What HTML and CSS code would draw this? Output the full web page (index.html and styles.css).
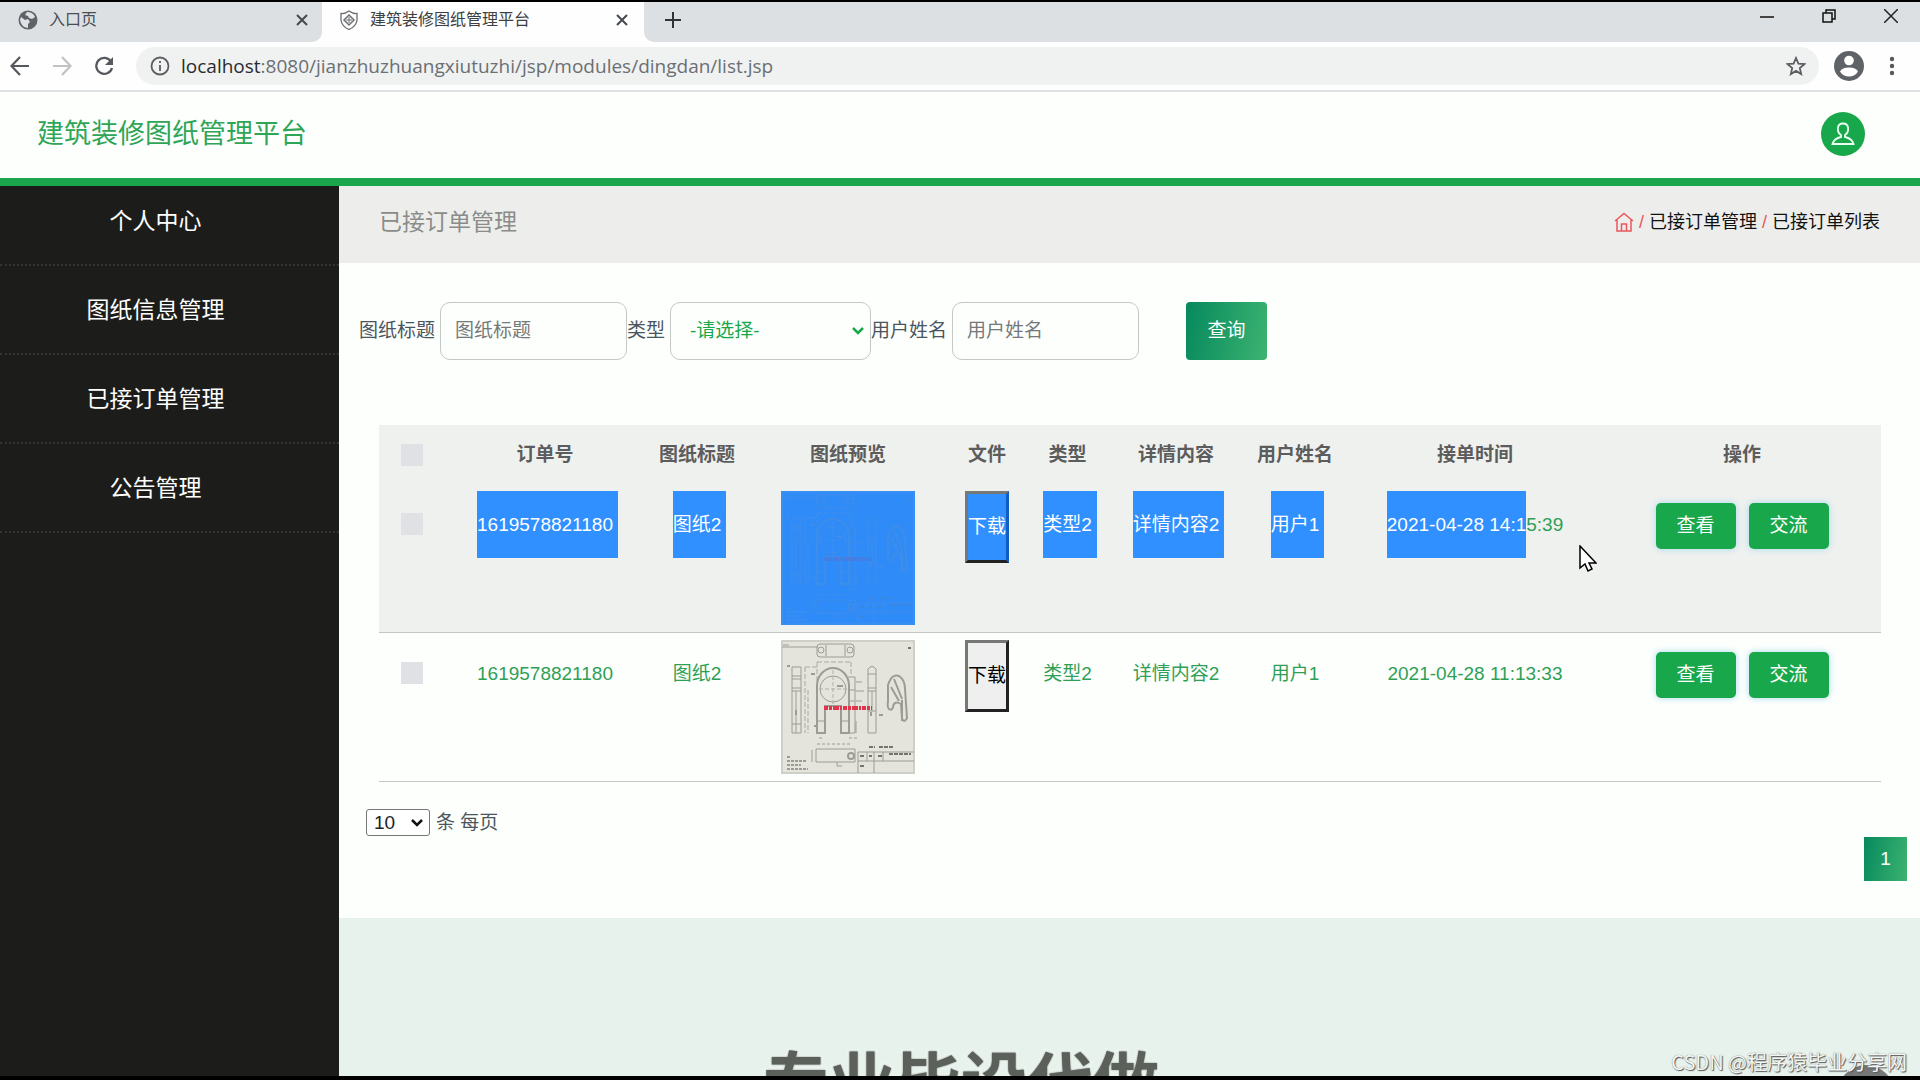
FILE: index.html
```html
<!DOCTYPE html>
<html lang="zh-CN">
<head>
<meta charset="utf-8">
<meta name="viewport" content="width=device-width, initial-scale=1">
<title>建筑装修图纸管理平台</title>
<link rel="stylesheet" href="styles.css">
</head>
<body>
<svg class="defs" aria-hidden="true">
  <symbol id="drawing" viewBox="0 0 134 134">
    <g fill="none" stroke="#9b9c95" stroke-width="1">
      <rect x="1" y="1" width="132" height="132" stroke="#b9bab2"/>
      <path d="M1 7h36M8 5h-6" />
      <rect x="36" y="4" width="37" height="13" rx="3"/>
      <circle cx="40" cy="10" r="3"/><circle cx="69" cy="10" r="3"/>
      <path d="M45 5v11M64 5v11"/>
      <path d="M36 22h34M36 22v70M70 22v14M24 27v66M27 50v43M24 27h12" stroke-dasharray="5 2" stroke="#a9aaa3"/>
      <path d="M11 27h9v66h-9zM11 36h9M11 39h9M11 48h9M11 51h9M11 84h9M15 51v42"/>
      <path d="M36 93V46a16 18 0 0 1 32 0v47h-8V66H44v27z" stroke-width="2"/>
      <circle cx="52" cy="49" r="13"/>
      <path d="M52 30v36M38 49h28" stroke-dasharray="4 2" stroke="#b0b1aa"/>
      <path d="M36 81h8v12M60 81h8M67 37h7v56h-7M67 50h7M67 61h7M75 42h6M75 51h8M75 61h6M75 81v12"/>
      <path d="M87 93V29q4-5 8 0v64zM87 34h8M87 48h8M87 51h8M87 71h8M91 51v20"/>
      <path d="M107 61V45q4-12 11-9q6 4 6 13l2 29q-3 6-5 0l-1-14q-7-4-8 3q-1 4-4 2q-2-2-1-8zM110 47l8 14M113 39l8 20M121 60v21" stroke-width="2"/>
      <path d="M36 104h34M38 98h4M68 98h10" stroke-dasharray="3 2"/>
      <path d="M35 109h39v13H35zM31 110v12M56 122v4h5M77 112h56M77 121h56M77 112v21M86 112v9M93 112v21M102 112v9"/>
      <circle cx="70" cy="116" r="3" stroke-width="2"/>
      <path d="M6 117h4M6 121h19M6 125h14M6 129h21" stroke-width="2" stroke-dasharray="3 1"/>
      <path d="M88 107h6M98 107h14M79 116h5M88 116h3M97 116h4M79 126h4M108 114h22M127 8h3" stroke="#74756f" stroke-width="2" stroke-dasharray="4 1"/>
      <path d="M6 26h3M30 34h4M56 46h6M15 70v5M90 72v4M33 86h3M98 75h4" stroke-width="2"/>
    </g>
    <path d="M43 68h48" stroke="#e1354b" stroke-width="4" stroke-dasharray="4 1 3 1 6 1 2 1"/>
  </symbol>
</svg>

<div class="window">
  <div class="tabs">
    <div class="tab">
      <svg class="tab-icon" viewBox="0 0 20 20"><circle cx="10" cy="10" r="9.500" fill="#5f6368"/><path d="M3 7l4 3 3-1 2 3-2 2v4q-7-1-8-8zM9 2q6 0 8 5l-3 2-3-1-1-2-3-1z" fill="#dee1e6"/></svg>
      <span class="tab-title">入口页</span>
      <button class="icon-button" aria-label="关闭标签页"><svg width="12" height="12" viewBox="0 0 12 12"><path d="M1 1l10 10M11 1L1 11" stroke="#45484c" stroke-width="2"/></svg></button>
    </div>
    <div class="tab tab-active">
      <svg class="tab-icon" viewBox="0 0 20 20" fill="none" stroke="#6b6e72"><path d="M10 1q4 3 8 2.500v7q-1 6-8 9q-7-3-8-9v-7q4 .5 8-2.500z" stroke-width="1.300"/><path d="M10 5l5 5-5 5-5-5z" stroke-width="1.500"/><path d="M10 7v6M7 10h6"/></svg>
      <span class="tab-title">建筑装修图纸管理平台</span>
      <button class="icon-button" aria-label="关闭标签页"><svg width="12" height="12" viewBox="0 0 12 12"><path d="M1 1l10 10M11 1L1 11" stroke="#45484c" stroke-width="2"/></svg></button>
    </div>
    <button class="icon-button new-tab" aria-label="新标签页"><svg width="16" height="16" viewBox="0 0 16 16"><path d="M8 0v16M0 8h16" stroke="#333" stroke-width="2"/></svg></button>
    <div class="window-controls">
      <button class="icon-button" aria-label="最小化"><svg width="14" height="14" viewBox="0 0 14 14"><path d="M0 8h14" stroke="#111" stroke-width="1.500"/></svg></button>
      <button class="icon-button" aria-label="还原"><svg width="14" height="14" viewBox="0 0 14 14" fill="none" stroke="#111" stroke-width="1.500"><path d="M1 4h9v9H1zM4 4V1h9v9h-3"/></svg></button>
      <button class="icon-button" aria-label="关闭"><svg width="14" height="14" viewBox="0 0 14 14"><path d="M0 0l14 14M14 0L0 14" stroke="#222" stroke-width="1.500"/></svg></button>
    </div>
  </div>
  <div class="toolbar">
    <button class="icon-button" aria-label="后退"><svg width="20" height="20" viewBox="0 0 20 20" fill="none" stroke="#55585c" stroke-width="2.200"><path d="M19 10H2M10 1L1.500 10l8.500 9"/></svg></button>
    <button class="icon-button" aria-label="前进"><svg width="20" height="20" viewBox="0 0 20 20" fill="none" stroke="#c0c2c4" stroke-width="2.200"><path d="M1 10h17M10 1l8.500 9-8.500 9"/></svg></button>
    <button class="icon-button" aria-label="重新加载"><svg width="20" height="20" viewBox="0 0 20 20" fill="none" stroke="#55585c" stroke-width="2.300"><path d="M17 5.500A8 8 0 1 0 18 12"/><path d="M19 1v8h-8z" fill="#55585c" stroke="none"/></svg></button>
    <div class="address">
      <svg width="20" height="20" viewBox="0 0 20 20" fill="none" stroke="#5a5d61" stroke-width="1.800"><circle cx="10" cy="10" r="8.500"/><path d="M10 9v6M10 5v2"/></svg>
      <span class="url"><span class="host">localhost</span>:8080/jianzhuzhuangxiutuzhi/jsp/modules/dingdan/list.jsp</span>
      <svg width="20" height="20" viewBox="0 0 20 20" fill="none" stroke="#5a5d61" stroke-width="1.800"><path d="M10 2l2.400 5.600 6 .5-4.600 4 1.400 6-5.200-3.200-5.200 3.200 1.400-6-4.600-4 6-.5z"/></svg>
    </div>
    <button class="icon-button" aria-label="用户"><svg width="30" height="30" viewBox="0 0 30 30"><circle cx="15" cy="15" r="15" fill="#5f6368"/><circle cx="15" cy="9.500" r="4.800" fill="#fff"/><path d="M6 20.500q2-4 9-4t9 4q-3 5-9 5t-9-5z" fill="#fff"/></svg></button>
    <button class="icon-button" aria-label="菜单"><svg width="6" height="20" viewBox="0 0 6 20" fill="#55585c"><circle cx="3" cy="3" r="2.200"/><circle cx="3" cy="10" r="2.200"/><circle cx="3" cy="17" r="2.200"/></svg></button>
  </div>
</div>

<header class="site-header">
  <h1 class="brand">建筑装修图纸管理平台</h1>
  <button class="avatar" aria-label="个人中心"><svg width="24" height="24" viewBox="0 0 24 24" fill="none" stroke="#e8fff0" stroke-width="1.800"><path d="M12 1.500c-7 0-6 9-2 11.500v2q-7 1.500-8.500 7h21q-1.500-5.500-8.500-7v-2c4-2.500 5-11.500-2-11.500z"/></svg></button>
</header>

<div class="shell">
  <nav class="sidebar">
    <ul class="menu">
      <li><a href="#">个人中心</a></li>
      <li><a href="#">图纸信息管理</a></li>
      <li><a href="#">已接订单管理</a></li>
      <li><a href="#">公告管理</a></li>
    </ul>
  </nav>
  <main class="content">
    <div class="page-bar">
      <h2 class="page-title">已接订单管理</h2>
      <div class="crumbs">
        <a href="#" aria-label="首页"><svg class="home" width="20" height="20" viewBox="0 0 20 20" fill="none" stroke="#e9575c" stroke-width="1.500"><path d="M1 9l9-7.500L19 9M3 8v11h14V8M7.500 19v-7h5v7"/></svg></a>
        <span class="slash">/</span><a href="#">已接订单管理</a><span class="slash">/</span><a href="#">已接订单列表</a>
      </div>
    </div>
    <section class="panel">
      <form class="search">
        <label for="title">图纸标题</label>
        <input class="field" id="title" type="text" placeholder="图纸标题">
        <label for="type">类型</label>
        <span class="select-wrap">
          <select class="field type-select" id="type"><option>-请选择-</option></select>
          <svg class="chevron" width="12" height="8" viewBox="0 0 12 8"><path d="M1 1l5 5 5-5" fill="none" stroke="#19a74b" stroke-width="2.500"/></svg>
        </span>
        <label for="user">用户姓名</label>
        <input class="field" id="user" type="text" placeholder="用户姓名">
        <button class="query" type="button">查询</button>
      </form>

      <table class="orders">
        <colgroup>
          <col class="c-check"><col class="c-no"><col class="c-title"><col class="c-preview"><col class="c-file"><col class="c-type"><col class="c-detail"><col class="c-user"><col class="c-time"><col class="c-action">
        </colgroup>
        <thead>
          <tr>
            <th><input type="checkbox" class="check" aria-label="全选"></th>
            <th>订单号</th><th>图纸标题</th><th>图纸预览</th><th>文件</th><th>类型</th><th>详情内容</th><th>用户姓名</th><th>接单时间</th><th>操作</th>
          </tr>
        </thead>
        <tbody>
          <tr class="shaded">
            <td><input type="checkbox" class="check" aria-label="选择订单"></td>
            <td><span class="marked marked-end">1619578821180</span></td>
            <td><span class="marked marked-end">图纸2</span></td>
            <td><span class="thumb thumb-marked"><svg class="sheet" role="img" aria-label="图纸"><use href="#drawing"/></svg></span></td>
            <td><button class="download download-marked" type="button">下载</button></td>
            <td><span class="marked marked-end">类型2</span></td>
            <td><span class="marked marked-end">详情内容2</span></td>
            <td><span class="marked marked-end">用户1</span></td>
            <td><span class="marked">2021-04-28 14:1</span>5:39</td>
            <td><div class="actions"><button class="action" type="button">查看</button><button class="action" type="button">交流</button></div></td>
          </tr>
          <tr>
            <td><input type="checkbox" class="check" aria-label="选择订单"></td>
            <td>1619578821180</td>
            <td>图纸2</td>
            <td><span class="thumb"><svg class="sheet" role="img" aria-label="图纸"><use href="#drawing"/></svg></span></td>
            <td><button class="download" type="button">下载</button></td>
            <td>类型2</td>
            <td>详情内容2</td>
            <td>用户1</td>
            <td>2021-04-28 11:13:33</td>
            <td><div class="actions"><button class="action" type="button">查看</button><button class="action" type="button">交流</button></div></td>
          </tr>
        </tbody>
      </table>

      <div class="page-size">
        <span class="select-wrap">
          <select class="size-select" id="size"><option>10</option></select>
          <svg class="chevron" width="12" height="8" viewBox="0 0 12 8"><path d="M1 1l5 5 5-5" fill="none" stroke="#111" stroke-width="2.500"/></svg>
        </span>
        <label for="size">条 每页</label>
      </div>
      <div class="pagination"><button class="page" type="button">1</button></div>
    </section>
  </main>
</div>

<div class="overlay">
  <svg class="cursor" width="18" height="28" viewBox="0 0 18 28"><path d="M1 1v22l5-4 3 7 4-2-3-6h7z" fill="#fff" stroke="#000" stroke-width="1.500"/></svg>
  <span class="caption">专业毕设代做</span>
  <span class="bubble"></span>
  <span class="credit">CSDN @程序猿毕业分享网</span>
</div>
</body>
</html>
```
FILE: styles.css
```css
* { box-sizing: border-box; }

body {
  margin: 0;
  min-height: 100vh;
  display: flex;
  flex-direction: column;
  border-top: 2px solid #000;
  border-bottom: 4px solid #000;
  background: #e6f2eb;
  font-family: "Liberation Sans", "Noto Sans CJK SC", sans-serif;
  font-size: 19px;
  color: #4a5560;
}

button, input, select { font: inherit; margin: 0; }
a { color: inherit; text-decoration: none; }
svg { display: block; flex: none; }
.defs { position: absolute; width: 0; height: 0; }

.icon-button {
  display: flex;
  padding: 0;
  border: 0;
  background: none;
}

/* browser frame */
.window { background: #fdfefd; border-bottom: 2px solid #dfe1e2; }
.tabs { display: flex; height: 40px; background: #fdfefd; }
.tab {
  display: flex;
  align-items: center;
  gap: 11px;
  width: 322px;
  padding: 0 14px 4px 18px;
  background: #dde0e3;
  border-bottom-right-radius: 10px;
  font-size: 16px;
  color: #4b4e52;
}
.tab-active { background: #fdfefd; color: #3c4043; padding: 0 16px 4px 17px; }
.tab-icon { width: 20px; height: 20px; }
.tab-title { flex: 1; line-height: 24px; }
.new-tab {
  align-items: center;
  width: 80px;
  padding: 0 0 4px 21px;
  background: #dde0e3;
  border-bottom-left-radius: 10px;
}
.window-controls {
  flex: 1;
  display: flex;
  justify-content: flex-end;
  gap: 48px;
  padding: 7px 22px 0 0;
  background: #dde0e3;
}
.toolbar {
  display: flex;
  align-items: center;
  gap: 22px;
  height: 48px;
  padding: 0 25px 0 10px;
}
.toolbar > .icon-button:last-child { margin-left: 3px; }
.address {
  flex: 1;
  display: flex;
  align-items: center;
  gap: 11px;
  height: 38px;
  padding: 0 13px 0 14px;
  margin-right: -7px;
  border-radius: 19px;
  background: #f0f2f2;
}
.url {
  flex: 1;
  font-family: "Open Sans", "Noto Sans", sans-serif;
  font-size: 19px;
  color: #6b6f73;
}
.host { color: #2a2c2e; }

/* site header */
.site-header {
  display: flex;
  align-items: center;
  justify-content: space-between;
  height: 94px;
  padding: 0 55px 2px 37px;
  border-bottom: 8px solid #1ba54c;
  background: #fdfffd;
}
.brand { margin: 0; font-size: 27px; font-weight: 400; line-height: 38px; color: #2fa556; }
.avatar {
  display: flex;
  align-items: center;
  justify-content: center;
  width: 44px;
  height: 44px;
  padding: 0;
  border: 0;
  border-radius: 50%;
  background: #19a74b;
}

/* body */
.shell { flex: 1; display: flex; }
.sidebar { flex: none; width: 339px; background: #1c1d1b; }
.menu { margin: 0; padding: 19px 0 0; list-style: none; }
.menu li {
  padding: 28px 28px 26px 0;
  border-bottom: 2px dotted #343533;
  text-align: center;
  font-size: 23px;
  line-height: 33px;
  color: #fff;
}
.menu li:first-child { padding-top: 0; }

.content { flex: 1; min-width: 0; }
.page-bar {
  display: flex;
  align-items: center;
  justify-content: space-between;
  height: 77px;
  padding: 0 40px 6px;
  background: #edeeec;
}
.page-title { margin: 0; font-size: 23px; font-weight: 400; line-height: 32px; color: #8a8c8a; }
.crumbs { display: flex; align-items: center; gap: 5px; font-size: 18px; line-height: 28px; color: #111; }
.slash { color: #e9575c; }

.panel { padding: 39px 0 37px; background: #fdfffd; }
.search { display: flex; align-items: center; padding-left: 20px; line-height: 28px; }
.search label { margin-right: 5px; flex: none; }
.field {
  width: 187px;
  height: 58px;
  padding: 0 14px;
  border: 1px solid #c4c8c6;
  border-radius: 10px;
  background: #fdfffd;
  color: #4a5560;
}
.field::placeholder { color: #75797a; opacity: 1; }
.select-wrap { position: relative; display: inline-flex; }
.type-select { width: 201px; padding: 0 19px; color: #19a74b; appearance: none; }
.chevron { position: absolute; right: 7px; top: 50%; margin-top: -4px; pointer-events: none; }
.query {
  width: 81px;
  height: 58px;
  margin-left: 47px;
  padding: 0;
  border: 0;
  border-radius: 4px;
  background: linear-gradient(100deg, #06895d, #3cb371);
  color: #fff;
}

/* orders table */
.orders {
  width: calc(100% - 79px);
  margin: 65px 39px 27px 40px;
  border-collapse: separate;
  border-spacing: 0;
  table-layout: fixed;
  text-align: center;
  line-height: 67px;
  color: #2f9f56;
}
.c-check { width: 65px; }
.c-no { width: 202px; }
.c-title { width: 102px; }
.c-preview { width: 200px; }
.c-file { width: 78px; }
.c-type { width: 83px; }
.c-detail { width: 134px; }
.c-user { width: 104px; }
.c-time { width: 256px; }
.c-action { width: 278px; }
.orders th {
  height: 59px;
  padding: 0;
  background: #eff1ef;
  line-height: 28px;
  color: #5c5c5c;
}
.orders td {
  padding: 7px 0;
  border-bottom: 1px solid #c3c6c4;
  vertical-align: top;
  white-space: nowrap;
}
.shaded { background: #eff1ef; }
.check {
  display: block;
  width: 22px;
  height: 22px;
  margin: 0 auto;
  appearance: none;
  background: #dfe1e4;
}
td .check { margin-top: 22px; }
.marked { display: inline-block; background: #3090ff; color: #fff; }
/* the selection runs on past the end of a cell's text */
.marked-end { padding-right: 5px; margin-right: -5px; }
.thumb { display: block; width: 134px; height: 134px; margin: 0 auto; background: #e4e4dc; }
.sheet { width: 134px; height: 134px; }
.thumb-marked { background: #2e8bf8; }
.thumb-marked .sheet { opacity: 0.15; }
.download {
  display: block;
  width: 44px;
  margin: 0 auto;
  padding: 0;
  border: 3px solid;
  border-color: #767876 #222 #222 #767876;
  background: #efefef;
  line-height: 66px;
  color: #000;
}
.download-marked { background: #3090ff; border-right-color: #0f5ec4; color: #fff; }
.actions { display: flex; justify-content: center; gap: 13px; padding: 12px 0 0; }
.action {
  width: 80px;
  height: 46px;
  padding: 0;
  border: 0;
  border-radius: 5px;
  background: #19a74b;
  box-shadow: 0 0 7px #a5d8ea;
  line-height: 46px;
  color: #fff;
}

.page-size { display: flex; align-items: center; gap: 6px; padding-left: 27px; line-height: 26px; }
.size-select {
  width: 64px;
  height: 27px;
  padding: 0 7px;
  border: 1px solid #767676;
  border-radius: 3px;
  background: #fff;
  color: #222;
  appearance: none;
}
.pagination { display: flex; justify-content: flex-end; padding: 1px 13px 0 0; }
.page {
  width: 43px;
  height: 44px;
  padding: 0;
  border: 0;
  background: linear-gradient(100deg, #06895d, #3cb371);
  color: #fff;
}

/* items floating over the page */
.overlay { position: absolute; inset: 0 0 4px; overflow: hidden; pointer-events: none; }
.cursor { position: absolute; left: 1579px; top: 545px; }
.caption {
  position: absolute;
  left: 763px;
  bottom: -48px;
  font-size: 66px;
  font-weight: 700;
  line-height: 80px;
  color: #5b605b;
  -webkit-text-stroke: 5px #edf5f0;
  paint-order: stroke fill;
  text-shadow: 0 0 2px #7d847f;
}
.bubble {
  position: absolute;
  right: 26px;
  bottom: -45px;
  width: 56px;
  height: 56px;
  border-radius: 50%;
  background: #757876;
}
.credit {
  position: absolute;
  right: 13px;
  bottom: 0;
  font-family: "Noto Sans CJK SC", sans-serif;
  font-size: 20px;
  line-height: 28px;
  color: #f4f6f4;
  text-shadow: 1px 1px 1px #555, 0 0 1px #777;
}
```
